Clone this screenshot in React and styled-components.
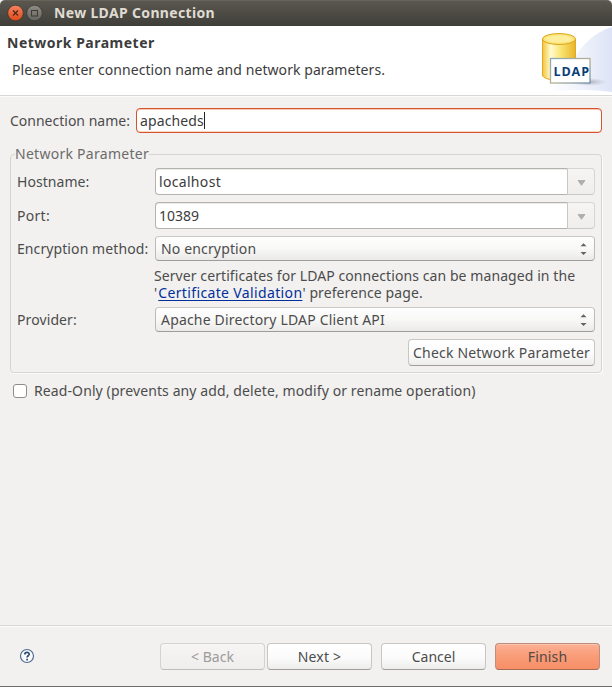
import React from "react";
import styled, { createGlobalStyle } from "styled-components";

const GlobalStyle = createGlobalStyle`
  * { box-sizing: border-box; }
  html, body { margin: 0; padding: 0; overflow: hidden; }
  body { background: #f2f1f0; }
`;

const Dialog = styled.div`
  width: 612px;
  height: 687px;
  display: flex;
  flex-direction: column;
  background: #f2f1f0;
  border-bottom: 1px solid #6d6c69;
  color: #4c4c4c;
  font: 14px/18px "Noto Sans", "Open Sans", sans-serif;
  white-space: nowrap;
`;

const Text = styled.span`
  letter-spacing: ${(p) => p.$track || 0}px;
`;

const TitleBar = styled.header`
  height: 26px;
  flex: none;
  display: flex;
  align-items: center;
  padding-left: 7px;
  gap: 2px;
  background: linear-gradient(#5a574f, #3f3e39);
  border-top: 1px solid #66635b;
  border-radius: 5px 5px 0 0;
  color: #dfdbd2;
  font-weight: 700;
`;

const Title = styled(Text)`
  margin-left: 9px;
  margin-top: -1px;
`;

const Banner = styled.section`
  height: 70px;
  flex: none;
  display: flex;
  justify-content: space-between;
  background: #fff;
  border-bottom: 1px solid #d9d8d7;
  color: #3c3c3c;
`;

const BannerText = styled.div`
  display: flex;
  flex-direction: column;
  gap: 9px;
  padding: 8px 0 0 7px;
`;

const Heading = styled.strong`
  font-weight: 700;
  letter-spacing: 0.5px;
`;

const Hint = styled(Text)`
  padding-left: 5px;
`;

const Content = styled.main`
  flex: 1;
  display: flex;
  flex-direction: column;
  border-top: 1px solid #fbfbfa;
  padding: 11px 10px 0;
`;

const NameRow = styled.label`
  display: flex;
  align-items: center;
  justify-content: space-between;
  height: 25px;
`;

const NameField = styled.span`
  width: 466px;
  height: 25px;
  display: flex;
  align-items: center;
  padding-left: 3px;
  background: #fff;
  border: 1px solid #d2552b;
  border-radius: 4px;
  box-shadow: inset 0 1px #f8c7b5, inset 0 -1px #fbd8ca;
  color: #3c3c3c;
`;

const Caret = styled.span`
  width: 1px;
  height: 17px;
  background: #222;
`;

const Group = styled.fieldset`
  margin: 12px 0 0;
  padding: 5px 6px 6px;
  height: 228px;
  min-width: 0;
  border: 1px solid #d6d5d3;
  border-radius: 4px;
  box-shadow: 1px 1px #fafaf9;
`;

const Legend = styled.legend`
  height: 18px;
  margin-left: -2px;
  padding: 0;
  color: #6c6b69;
`;

const Rows = styled.div`
  display: grid;
  grid-template-columns: 138px 440px;
  grid-template-rows: 27px 27px 25px 32px 25px 27px;
  row-gap: 7px;
  align-items: center;
`;

const Combo = styled.div`
  height: 27px;
  display: grid;
  grid-template-columns: 413px 27px;
`;

const ComboInput = styled.span`
  display: flex;
  align-items: center;
  padding: 0 0 0 3px;
  background: #fff;
  border: 1px solid #b3b2ae;
  border-right-color: #c8c7c4;
  border-radius: 4px 0 0 4px;
  box-shadow: inset 0 1px #ecebea;
  color: #3c3c3c;
`;

const ComboButton = styled.span`
  display: flex;
  align-items: center;
  justify-content: center;
  padding-top: 2px;
  background: linear-gradient(#f6f5f4, #efeeed);
  border: 1px solid #d6d5d3;
  border-left: 0;
  border-bottom-color: #cac9c6;
  border-radius: 0 4px 4px 0;
`;

const Select = styled.div`
  height: 25px;
  display: flex;
  align-items: center;
  justify-content: space-between;
  padding: 0 6px 0 5px;
  background: linear-gradient(#fefefe, #f8f8f7 50%, #ebeae9);
  border: 1px solid #bdbbb8;
  border-top-color: #cbc9c6;
  border-bottom-color: #9e9c99;
  border-radius: 4px;
`;

const Note = styled.p`
  grid-column: 2;
  margin: -1px 0 0 -1px;
  display: flex;
  flex-direction: column;
  line-height: 17px;
`;

const Link = styled.a`
  margin-left: 1px;
  color: #00309a;
  letter-spacing: 0.36px;
  text-decoration: underline;
  text-underline-offset: 2px;
`;

const looks = {
  normal: ["linear-gradient(#ffffff, #fbfbfb 55%, #ededec)", "#c8c6c3", "#a09e9b", "#4c4c4c"],
  disabled: ["linear-gradient(#f6f5f4, #efeeed)", "#d5d3d0", "#bfbdba", "#9c9b99"],
  primary: ["linear-gradient(#fbb195, #f99d79 45%, #f78f67)", "#bb8f7d", "#a56b55", "#524a46"],
};

const Button = styled.button`
  width: ${(p) => p.$width || 105}px;
  height: 27px;
  display: flex;
  align-items: center;
  justify-content: center;
  padding: 0;
  font: inherit;
  white-space: nowrap;
  color: ${(p) => looks[p.$look || "normal"][3]};
  background: ${(p) => looks[p.$look || "normal"][0]};
  border: 1px solid ${(p) => looks[p.$look || "normal"][1]};
  border-bottom-color: ${(p) => looks[p.$look || "normal"][2]};
  border-radius: 4px;
  box-shadow: inset 0 1px rgba(255, 255, 255, 0.25);
`;

const CheckButton = styled(Button)`
  grid-column: 2;
  justify-self: end;
`;

const CheckRow = styled.label`
  display: flex;
  align-items: center;
  gap: 7px;
  margin: 9px 0 0 3px;
`;

const Box = styled.span`
  width: 14px;
  height: 14px;
  background: #fff;
  border: 1px solid #8f8d8a;
  border-radius: 3px;
`;

const Footer = styled.footer`
  height: 61px;
  flex: none;
  display: flex;
  align-items: flex-start;
  justify-content: space-between;
  padding: 17px 12px 0 19px;
  border-top: 1px solid #d9d8d7;
  box-shadow: inset 0 1px #fbfbfa;
`;

const Actions = styled.div`
  display: flex;
  gap: 9px;
`;

const Pair = styled.div`
  display: flex;
  gap: 2px;
`;

const HelpIcon = styled.svg`
  margin-top: 5px;
`;

const CloseButton = () => (
  <svg width="17" height="17" viewBox="0 0 17 17">
    <defs>
      <linearGradient id="close" x1="0" y1="0" x2="0" y2="1">
        <stop offset="0" stopColor="#f58462" />
        <stop offset="1" stopColor="#df4a18" />
      </linearGradient>
    </defs>
    <circle cx="8.5" cy="8" r="7.8" fill="url(#close)" stroke="#35332e" strokeWidth=".7" />
    <path d="M6 5.500l5 5M11 5.500l-5 5" stroke="#4e2719" strokeWidth="1.2" />
  </svg>
);

const MaximizeButton = () => (
  <svg width="17" height="17" viewBox="0 0 17 17">
    <defs>
      <linearGradient id="max" x1="0" y1="0" x2="0" y2="1">
        <stop offset="0" stopColor="#8d8b84" />
        <stop offset="1" stopColor="#67655f" />
      </linearGradient>
    </defs>
    <circle cx="8.5" cy="8" r="7.8" fill="url(#max)" stroke="#35332e" strokeWidth=".7" />
    <rect x="5.5" y="5.5" width="6" height="5.5" fill="none" stroke="#3d3b36" />
  </svg>
);

const DatabaseIcon = () => (
  <svg width="82" height="69" viewBox="0 0 82 69">
    <defs>
      <linearGradient id="gold">
        <stop offset="0" stopColor="#f3c53a" />
        <stop offset=".25" stopColor="#fffbd0" />
        <stop offset=".55" stopColor="#fbe574" />
        <stop offset="1" stopColor="#e8b52a" />
      </linearGradient>
      <linearGradient id="sky" x1="0" y1="0" x2="1" y2="0">
        <stop offset="0" stopColor="#fff" />
        <stop offset=".5" stopColor="#f0f3fb" />
        <stop offset="1" stopColor="#dde4f6" />
      </linearGradient>
      <linearGradient id="frame" x1="0" y1="0" x2="1" y2="1">
        <stop offset="0" stopColor="#86a8bb" />
        <stop offset=".5" stopColor="#b9b193" />
        <stop offset="1" stopColor="#6f8fae" />
      </linearGradient>
      <radialGradient id="shade">
        <stop offset="0" stopColor="#827f99" stopOpacity=".6" />
        <stop offset="1" stopColor="#aaa" stopOpacity="0" />
      </radialGradient>
    </defs>
    <path d="M82 1V66C66 64 40 63 18 66C40 48 46 12 82 1Z" fill="url(#sky)" />
    <ellipse cx="59" cy="56" rx="18" ry="4" fill="url(#shade)" />
    <path d="M12.5 13V49C12.5 56 45.500 56 45.500 49V13Z" fill="url(#gold)" stroke="#dfa827" />
    <ellipse cx="29" cy="13" rx="16.500" ry="5.500" fill="#fbe47b" stroke="#dda51c" />
    <ellipse cx="29" cy="13" rx="13" ry="3.500" fill="#fdee9d" />
    <rect x="20.500" y="32.500" width="39.500" height="24.500" fill="#fff" stroke="url(#frame)" strokeWidth="1.3" />
    <text x="23.500" y="50" textLength="35.500" fontFamily="Open Sans, sans-serif" fontWeight="700" fontSize="12.500" fill="#073e79">LDAP</text>
  </svg>
);

const DropArrow = () => (
  <svg width="9" height="6" viewBox="0 0 9 6">
    <path d="M1 .5h7L4.500 5.300Z" fill="#b0afad" stroke="#9d9c9a" strokeWidth=".6" />
  </svg>
);

const UpDown = () => (
  <svg width="9" height="15" viewBox="0 0 9 15">
    <path d="M4.500 2.200L7.500 5.200h-6ZM4.500 14L7.500 11h-6Z" fill="#63625f" />
  </svg>
);

const ComboBox = ({ value, track }) => (
  <Combo>
    <ComboInput><Text $track={track}>{value}</Text></ComboInput>
    <ComboButton><DropArrow /></ComboButton>
  </Combo>
);

export default function App() {
  return (
    <>
      <GlobalStyle />
      <Dialog>
        <TitleBar>
          <CloseButton />
          <MaximizeButton />
          <Title $track={0.34}>New LDAP Connection</Title>
        </TitleBar>
        <Banner>
          <BannerText>
            <Heading>Network Parameter</Heading>
            <Hint $track={0.07}>Please enter connection name and network parameters.</Hint>
          </BannerText>
          <DatabaseIcon />
        </Banner>
        <Content>
          <NameRow>
            <Text>Connection name:</Text>
            <NameField><Text $track={0.12}>apacheds</Text><Caret /></NameField>
          </NameRow>
          <Group>
            <Legend><Text $track={0.27}>Network Parameter</Text></Legend>
            <Rows>
              <Text $track={0.05}>Hostname:</Text>
              <ComboBox value="localhost" track={0.32} />
              <Text $track={0.3}>Port:</Text>
              <ComboBox value="10389" />
              <Text $track={0.09}>Encryption method:</Text>
              <Select><Text $track={0.15}>No encryption</Text><UpDown /></Select>
              <Note>
                <Text $track={0.08}>Server certificates for LDAP connections can be managed in the</Text>
                <Text $track={0.1}>'<Link>Certificate Validation</Link>' preference page.</Text>
              </Note>
              <Text $track={0.1}>Provider:</Text>
              <Select><Text $track={0.18}>Apache Directory LDAP Client API</Text><UpDown /></Select>
              <CheckButton $width={187}><Text $track={0.19}>Check Network Parameter</Text></CheckButton>
            </Rows>
          </Group>
          <CheckRow>
            <Box />
            <Text $track={0.105}>Read-Only (prevents any add, delete, modify or rename operation)</Text>
          </CheckRow>
        </Content>
        <Footer>
          <HelpIcon width="16" height="16" viewBox="0 0 16 16">
            <circle cx="8" cy="8" r="6.500" fill="#fbfcfe" stroke="#526d90" strokeWidth="1.2" />
            <path d="M5.800 6.500C5.800 3.600 10.300 3.700 10.200 6.300C10.100 7.800 8.100 7.800 8.100 9.500M8.100 10.800v1.600" fill="none" stroke="#294a78" strokeWidth="1.700" />
          </HelpIcon>
          <Actions>
            <Pair>
              <Button $look="disabled" disabled><Text>&lt; Back</Text></Button>
              <Button><Text $track={0.2}>Next &gt;</Text></Button>
            </Pair>
            <Button><Text>Cancel</Text></Button>
            <Button $look="primary"><Text $track={0.15}>Finish</Text></Button>
          </Actions>
        </Footer>
      </Dialog>
    </>
  );
}
